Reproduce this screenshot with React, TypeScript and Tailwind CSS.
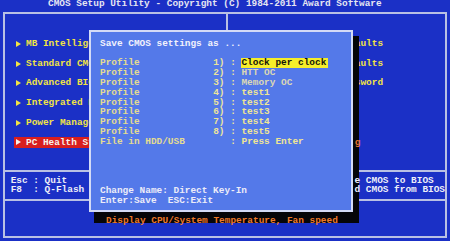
import React from "react";

const LEFT_MENU = [
  "MB Intelligent Tweaker(M.I.T.)",
  "Standard CMOS Features",
  "Advanced BIOS Features",
  "Integrated Peripherals",
  "Power Management Setup",
  "PC Health Status",
];

const RIGHT_MENU = [
  "Load Fail-Safe Defaults",
  "Load Optimized Defaults",
  "Set Supervisor Password",
  "Set User Password",
  "Save & Exit Setup",
  "Exit Without Saving",
];

const PROFILES = [
  { n: "1)", name: "Clock per clock", tone: "hi" },
  { n: "2)", name: "HTT OC", tone: "dim" },
  { n: "3)", name: "Memory OC", tone: "dim" },
  { n: "4)", name: "test1", tone: "" },
  { n: "5)", name: "test2", tone: "" },
  { n: "6)", name: "test3", tone: "" },
  { n: "7)", name: "test4", tone: "" },
  { n: "8)", name: "test5", tone: "" },
];

function Arrow() {
  return (
    <svg width="5" height="6" viewBox="0 0 5 6" className="shrink-0">
      <path d="M0 0L5 3L0 6Z" fill="currentColor" />
    </svg>
  );
}

function MenuRow({ label, active }: { label: React.ReactNode; active?: boolean }) {
  return (
    <div className="h-[19.7px]">
      <div
        className={`inline-flex items-center h-[11px] pl-[2px] ${
          active ? "w-[200px] bg-[#d81e1e] text-[#f6f0ea]" : "text-[#f2e444]"
        }`}
      >
        <Arrow />
        <span className="ml-[5px] whitespace-pre">{label}</span>
      </div>
    </div>
  );
}

// a character that sits in the dialog shadow but still shows through it
function Through({ ch, className }: { ch: string; className?: string }) {
  return <span className={`relative z-20 ${className ?? ""}`}>{ch}</span>;
}

export default function App() {
  return (
    <div className="relative w-[450px] h-[241px] overflow-hidden bg-[#1b30c6] font-['Liberation_Mono',monospace] font-bold text-[9.43px] leading-[9.85px]">
      {/* title */}
      <div className="h-[12px] overflow-hidden">
        <div className="mt-[-1px] pl-[48px] leading-[10px] text-[#e6e6f2] whitespace-pre">
          CMOS Setup Utility - Copyright (C) 1984-2011 Award Software
        </div>
      </div>

      {/* main frame */}
      <div className="ml-[3px] w-[444px] h-[226px] border-2 border-[#b9c0e4] flex flex-col">
        <div className="h-[158px] flex border-b-2 border-[#b9c0e4]">
          <div className="w-[223px] border-r-2 border-[#b9c0e4] pt-[24.5px] pl-[9px]">
            {LEFT_MENU.map((m, i) => (
              <MenuRow key={m} label={m} active={i === 5} />
            ))}
          </div>
          <div className="flex-1 pt-[24.5px] pl-[13px]">
            {RIGHT_MENU.map((m, i) => (
              <MenuRow
                key={m}
                label={
                  i === 5 ? (
                    <>
                      Exit Without Savin
                      <Through ch="g" className="text-[#e8742a]" />
                    </>
                  ) : (
                    m
                  )
                }
              />
            ))}
          </div>
        </div>

        {/* key help */}
        <div className="h-[29px] flex border-b-2 border-[#b9c0e4] pt-[3.5px] pl-[5.7px] text-[#eeeef8] whitespace-pre">
          <div>
            <div>Esc : Quit</div>
            <div>F8  : Q-Flash</div>
          </div>
          <div className="ml-auto">
            <div>
              F11 : Sav<Through ch="e" /> CMOS to BIOS
            </div>
            <div>
              F12 : Loa<Through ch="d" /> CMOS from BIOS
            </div>
          </div>
        </div>

        {/* status line */}
        <div className="flex-1 pt-[14.5px] pl-[101px]">
          <span className="relative z-20 text-[#ee7a28] whitespace-pre">
            Display CPU/System Temperature, Fan speed
          </span>
        </div>
      </div>

      {/* dialog shadow */}
      <div className="absolute left-[94px] top-[36px] w-[265px] h-[187px] bg-[#050508] z-10" />

      {/* dialog */}
      <div className="absolute left-[89px] top-[30px] w-[264px] z-30 border-2 border-[#d4dbf6] bg-[#5479e9] pt-[6.5px] pb-[4px] pl-[9px] whitespace-pre">
        <div className="text-[#f2f2fc]">Save CMOS settings as ...</div>
        <div className="h-[9.85px]" />
        {PROFILES.map((p) => (
          <div key={p.n} className="flex">
            <span className="w-[113.2px] text-[#e4dc90]">Profile</span>
            <span className="text-[#ece49a]">{p.n} : </span>
            <span
              className={
                p.tone === "hi"
                  ? "bg-[#f6ee2a] text-[#14140a] pr-[2px]"
                  : p.tone === "dim"
                  ? "text-[#dcd8b4]"
                  : "text-[#f0e694]"
              }
            >
              {p.name}
            </span>
          </div>
        ))}
        <div className="flex">
          <span className="w-[130.2px] text-[#e4dc90]">File in HDD/USB</span>
          <span className="text-[#f0e694]">: Press Enter</span>
        </div>
        <div className="h-[39.4px]" />
        <div className="text-[#ececf8]">Change Name: Direct Key-In</div>
        <div className="text-[#ececf8]">Enter:Save  ESC:Exit</div>
      </div>
    </div>
  );
}
